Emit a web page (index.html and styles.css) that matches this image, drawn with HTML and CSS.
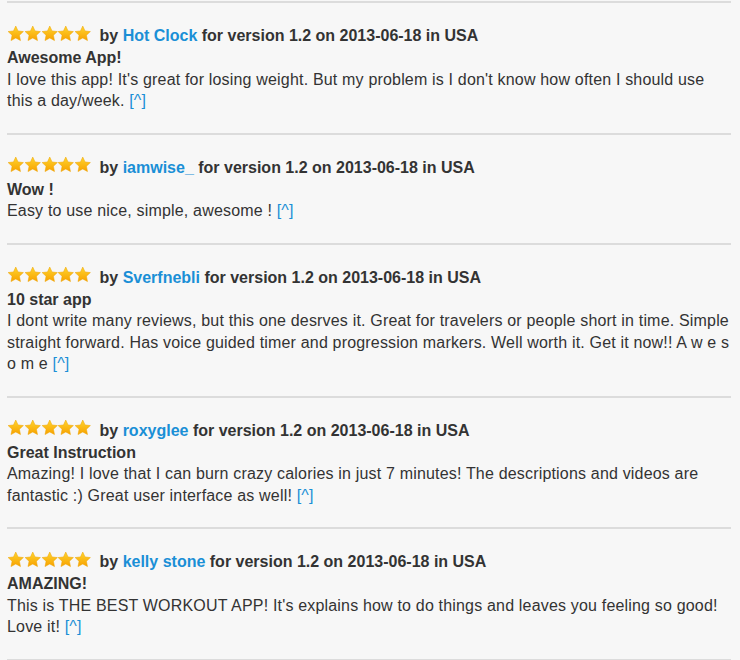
FILE: index.html
```html
<!DOCTYPE html>
<html lang="en">
<head>
    <meta charset="UTF-8">
    <title>Reviews</title>
    <link rel="stylesheet" href="styles.css">
</head>
<body>
    <svg width="0" height="0" class="defs">
        <defs>
            <linearGradient id="starfill" x1="0" y1="0" x2="0" y2="1">
                <stop offset="0" stop-color="#ffd52e"/>
                <stop offset="1" stop-color="#f7a100"/>
            </linearGradient>
            <symbol id="star" viewBox="0 0 20 20">
                <path d="M10 1.2l2.6 5.6 6.1.7-4.5 4.2 1.2 6.1L10 14.8l-5.4 3 1.2-6.1L1.3 7.5l6.1-.7z" fill="url(#starfill)" stroke="#f0a500" stroke-width="0.6"/>
            </symbol>
        </defs>
    </svg>

    <div class="reviews">

        <div class="review">
            <div class="meta">
                <span class="stars"><svg><use href="#star"/></svg><svg><use href="#star"/></svg><svg><use href="#star"/></svg><svg><use href="#star"/></svg><svg><use href="#star"/></svg></span>
                by <a href="#">Hot Clock</a> for version 1.2 on 2013-06-18 in USA
            </div>
            <div class="title">Awesome App!</div>
            <p>I love this app! It's great for losing weight. But my problem is I don't know how often I should use this a day/week. <a href="#" class="up">[^]</a></p>
        </div>

        <div class="review">
            <div class="meta">
                <span class="stars"><svg><use href="#star"/></svg><svg><use href="#star"/></svg><svg><use href="#star"/></svg><svg><use href="#star"/></svg><svg><use href="#star"/></svg></span>
                by <a href="#">iamwise_</a> for version 1.2 on 2013-06-18 in USA
            </div>
            <div class="title">Wow !</div>
            <p>Easy to use nice, simple, awesome ! <a href="#" class="up">[^]</a></p>
        </div>

        <div class="review">
            <div class="meta">
                <span class="stars"><svg><use href="#star"/></svg><svg><use href="#star"/></svg><svg><use href="#star"/></svg><svg><use href="#star"/></svg><svg><use href="#star"/></svg></span>
                by <a href="#">Sverfnebli</a> for version 1.2 on 2013-06-18 in USA
            </div>
            <div class="title">10 star app</div>
            <p>I dont write many reviews, but this one desrves it. Great for travelers or people short in time. Simple straight forward. Has voice guided timer and progression markers. Well worth it. Get it now!! A w e s o m e <a href="#" class="up">[^]</a></p>
        </div>

        <div class="review">
            <div class="meta">
                <span class="stars"><svg><use href="#star"/></svg><svg><use href="#star"/></svg><svg><use href="#star"/></svg><svg><use href="#star"/></svg><svg><use href="#star"/></svg></span>
                by <a href="#">roxyglee</a> for version 1.2 on 2013-06-18 in USA
            </div>
            <div class="title">Great Instruction</div>
            <p>Amazing! I love that I can burn crazy calories in just 7 minutes! The descriptions and videos are fantastic :) Great user interface as well! <a href="#" class="up">[^]</a></p>
        </div>

        <div class="review">
            <div class="meta">
                <span class="stars"><svg><use href="#star"/></svg><svg><use href="#star"/></svg><svg><use href="#star"/></svg><svg><use href="#star"/></svg><svg><use href="#star"/></svg></span>
                by <a href="#">kelly stone</a> for version 1.2 on 2013-06-18 in USA
            </div>
            <div class="title">AMAZING!</div>
            <p>This is THE BEST WORKOUT APP! It's explains how to do things and leaves you feeling so good! Love it! <a href="#" class="up">[^]</a></p>
        </div>

    </div>
</body>
</html>
```

FILE: styles.css
```css
body {
    margin: 0;
    background-color: #f7f7f7;
    font-family: "Liberation Sans", Arial, sans-serif;
    font-size: 16px;
    line-height: 21.5px;
    color: #333;
}
.defs {
    position: absolute;
}
.reviews {
    width: 724px;
    margin-left: 7px;
    padding-top: 1px;
}
.review {
    border-top: 2px solid #dcdcdc;
    padding: 21px 0;
}
.review:last-child {
    border-bottom: 2px solid #dcdcdc;
}
.meta {
    font-weight: bold;
    line-height: 23px;
}
.stars {
    display: inline-flex;
    vertical-align: -1px;
    margin-right: 4px;
}
.stars svg {
    width: 17.5px;
    height: 17.5px;
    margin-right: -0.7px;
}
a {
    color: #1a8fd6;
    text-decoration: none;
}
.title {
    font-weight: bold;
}
p {
    margin: 0;
    letter-spacing: 0.18px;
}
.up {
    font-weight: normal;
}
```
